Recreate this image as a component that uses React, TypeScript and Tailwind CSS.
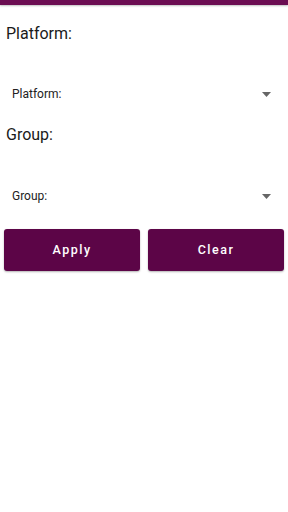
import React from "react";

function Spinner({ label }: { label: string }) {
  return (
    <div className="flex h-[48px] items-center justify-between pl-[12px] pr-[17px]">
      <span className="text-[12px] text-[#222]">{label}</span>
      <svg width="9" height="5" viewBox="0 0 9 5">
        <path d="M0 0 L9 0 L4.5 5 Z" fill="#666" />
      </svg>
    </div>
  );
}

export default function App() {
  return (
    <div className="w-[288px] h-[512px] bg-white" style={{ fontFamily: "Roboto, 'Noto Sans', sans-serif" }}>
      <div className="h-[5px] bg-[#6b0d52] shadow-[0_1px_2px_rgba(0,0,0,0.25)]" />
      <div className="pt-[19px]">
        <div className="px-[6px] text-[16px] leading-[19px] text-[#1a1a1a]">Platform:</div>
        <div className="mt-[27px]">
          <Spinner label="Platform:" />
        </div>
        <div className="mt-[7px] px-[6px] text-[16px] leading-[19px] text-[#1a1a1a]">Group:</div>
        <div className="mt-[28px]">
          <Spinner label="Group:" />
        </div>
        <div className="mt-[9px] flex gap-[8px] px-[4px]">
          <button className="flex h-[42px] flex-1 items-center justify-center rounded-[3px] bg-[#5c0547] text-[12.5px] font-medium tracking-[1.5px] text-white shadow-[0_1px_2px_rgba(0,0,0,0.3)]">
            Apply
          </button>
          <button className="flex h-[42px] flex-1 items-center justify-center rounded-[3px] bg-[#5c0547] text-[12.5px] font-medium tracking-[1.5px] text-white shadow-[0_1px_2px_rgba(0,0,0,0.3)]">
            Clear
          </button>
        </div>
      </div>
    </div>
  );
}
